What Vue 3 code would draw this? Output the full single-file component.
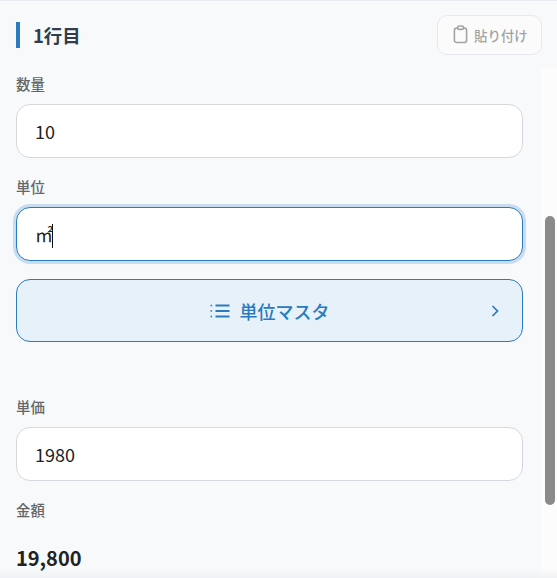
<script setup>
const unitLabel = '単位マスタ'
</script>

<template>
  <div class="page">
    <header class="head">
      <h2 class="title">1行目</h2>
      <button class="paste">
        <svg class="paste-icon" viewBox="0 0 16 20" fill="none" stroke="currentColor" stroke-width="1.7">
          <rect x="1.5" y="3" width="13" height="15.5" rx="2.5" />
          <rect x="5" y="1" width="6" height="3.5" rx="1.2" fill="#fbfbfc" />
        </svg>
        <span>貼り付け</span>
      </button>
    </header>

    <div class="body">
      <main class="form">
        <label class="label">数量</label>
        <div class="field">10</div>

        <label class="label unit-label">単位</label>
        <div class="field focused">㎡<span class="caret"></span></div>

        <button class="master">
          <svg class="list-icon" viewBox="0 0 20 16" fill="none" stroke="currentColor">
            <path stroke-width="1.8" d="M5.5 2.5h14M5.5 8h14M5.5 13.5h14" />
            <path stroke-width="1.6" d="M0.5 2.5h1.6M0.5 8h1.6M0.5 13.5h1.6" />
          </svg>
          <span>{{ unitLabel }}</span>
          <svg class="chevron" viewBox="0 0 8 14" fill="none" stroke="currentColor" stroke-width="1.7">
            <path d="M1.5 2l5 5-5 5" />
          </svg>
        </button>

        <label class="label price-label">単価</label>
        <div class="field">1980</div>

        <label class="label total-label">金額</label>
        <div class="amount">19,800</div>
      </main>
      <aside class="gutter">
        <div class="thumb"></div>
      </aside>
    </div>
    <div class="fade"></div>
  </div>
</template>

<style>
html, body { margin: 0; background: #f8f9fb; }
</style>

<style scoped>
.page {
  position: relative;
  width: 557px;
  height: 578px;
  overflow: hidden;
  box-sizing: border-box;
  border-top: 1px solid #e8eaf0;
  background: #f8f9fb;
  font-family: "Noto Sans CJK JP", "Noto Sans", sans-serif;
  color: #222;
}
.head {
  display: flex;
  align-items: center;
  justify-content: space-between;
  box-sizing: border-box;
  height: 67px;
  padding: 0 15px 0 16px;
}
.title {
  margin: 0;
  height: 26px;
  padding-left: 13px;
  border-left: 4px solid #2a7abf;
  font-size: 18.4px;
  font-weight: 700;
  line-height: 26px;
  color: #2f3d4f;
}
.paste {
  display: flex;
  align-items: center;
  gap: 6px;
  box-sizing: border-box;
  width: 105px;
  height: 40px;
  padding: 0 0 0 15px;
  border: 1px solid #e8e9ed;
  border-radius: 10px;
  background: #fbfbfc;
  color: #a3a3a3;
  font-family: inherit;
  font-size: 13.4px;
  font-weight: 500;
}
.paste-icon { width: 15px; height: 19px; }
.body { display: flex; height: 510px; }
.form {
  box-sizing: border-box;
  width: 541px;
  padding: 5px 18px 0 16px;
}
.label {
  display: block;
  height: 22px;
  font-size: 14.4px;
  font-weight: 500;
  line-height: 22px;
  color: #666;
}
.field {
  box-sizing: border-box;
  height: 54px;
  margin-top: 9px;
  padding: 0 18px;
  border: 1px solid #d5d8de;
  border-radius: 14px;
  background: #fff;
  font-size: 18px;
  line-height: 52px;
  color: #222;
}
.focused {
  border-color: #2a7abf;
  box-shadow: 0 0 0 3px #c8ddf0;
}
.caret {
  display: inline-block;
  width: 1px;
  height: 24px;
  margin-left: -1px;
  background: #111;
  vertical-align: -6px;
}
.unit-label { margin-top: 18px; }
.master {
  position: relative;
  display: flex;
  align-items: center;
  justify-content: center;
  gap: 10px;
  box-sizing: border-box;
  width: 507px;
  height: 63px;
  margin-top: 18px;
  border: 1px solid #2a7abf;
  border-radius: 14px;
  background: #e6f1fa;
  color: #2a7abf;
  font-family: inherit;
  font-size: 18px;
  font-weight: 500;
}
.list-icon { width: 20px; height: 16px; }
.chevron {
  position: absolute;
  right: 23px;
  top: 24px;
  width: 8px;
  height: 14px;
}
.price-label { margin-top: 54px; }
.total-label { margin-top: 18px; }
.amount {
  margin-top: 22px;
  font-size: 20px;
  font-weight: 700;
  line-height: 30px;
  color: #222;
}
.gutter {
  width: 16px;
  background: #fcfcfc;
}
.thumb {
  width: 10px;
  height: 289px;
  margin: 148px 0 0 4px;
  border-radius: 5px;
  background: #8a8a8a;
}
.fade {
  position: absolute;
  left: 0;
  right: 0;
  bottom: 0;
  height: 10px;
  background: linear-gradient(to bottom, rgba(240, 241, 244, 0), rgba(240, 241, 244, 0.9));
}
</style>
